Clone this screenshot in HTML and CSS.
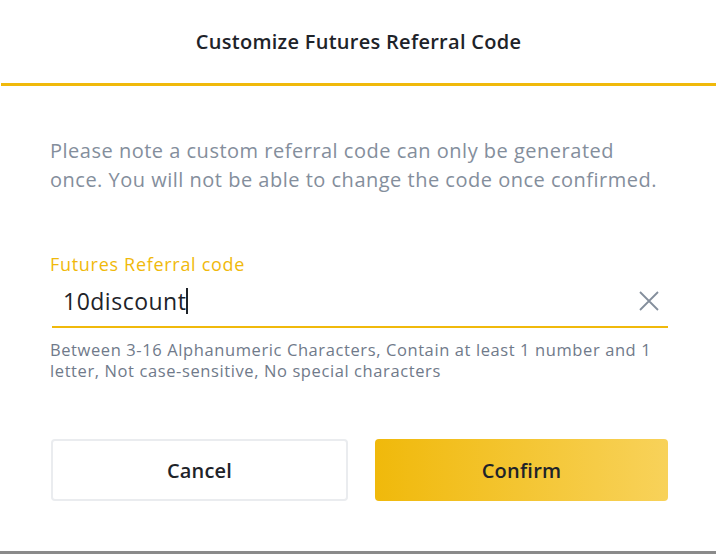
FILE: index.html
```html
<!DOCTYPE html>
<html>
<head>
<meta charset="utf-8">
<link rel="stylesheet" href="styles.css">
</head>
<body>
<div class="modal">
  <div class="header"><h1 class="title">Customize Futures Referral Code</h1></div>
  <div class="content">
    <p class="note">Please note a custom referral code can only be generated once. You will not be able to change the code once confirmed.</p>
    <div class="field">
      <div class="label">Futures Referral code</div>
      <div class="input-row">
        <span class="value">10discount</span><span class="caret"></span>
        <svg class="clear" width="22" height="22" viewBox="0 0 22 22"><path d="M2 2 L20 20 M20 2 L2 20" stroke="#848e9c" stroke-width="1.8" fill="none"/></svg>
      </div>
      <div class="hint">Between 3-16 Alphanumeric Characters, Contain at least 1 number and 1 letter, Not case-sensitive, No special characters</div>
    </div>
    <div class="actions">
      <button class="btn btn-cancel">Cancel</button>
      <button class="btn btn-confirm">Confirm</button>
    </div>
  </div>
</div>
</body>
</html>
```
FILE: styles.css
```css
html, body { margin: 0; padding: 0; background: #fff; }
body { font-family: "Open Sans", "Noto Sans", sans-serif; }
.modal {
  width: 716px;
  height: 554px;
  box-sizing: border-box;
  border-bottom: 3px solid #8a8a8a;
  display: flex;
  flex-direction: column;
}
.header {
  height: 83px;
  border-bottom: 3px solid #f0b90b;
  display: flex;
  align-items: center;
  justify-content: center;
  margin-left: 1px;
}
.title {
  margin: 0;
  font-size: 20px;
  font-weight: 600;
  letter-spacing: 0.28px;
  color: #1e2329;
}
.content { padding: 0 48px 0 50px; }
.note {
  margin: 50px 0 0;
  font-size: 20px;
  line-height: 29px;
  letter-spacing: 0.5px;
  color: #848e9c;
}
.field { margin-top: 59px; }
.label {
  font-size: 18px;
  line-height: 22px;
  letter-spacing: 0.7px;
  color: #f0b90b;
}
.input-row {
  display: flex;
  align-items: center;
  height: 51px;
  padding: 0 8px 0 11px;
  margin-left: 2px;
  border-bottom: 2px solid #f0b90b;
}
.value { font-size: 23px; letter-spacing: 0.5px; color: #1e2329; }
.caret { width: 2px; height: 26px; background: #1e2329; margin-left: 0; }
.clear { margin-left: auto; }
.hint {
  margin: 11px -22px 0 0;
  font-size: 16.5px;
  line-height: 21px;
  letter-spacing: 0.6px;
  color: #707a8a;
}
.actions {
  display: flex;
  gap: 27px;
  margin-top: 58px;
  padding-left: 1px;
}
.btn {
  flex: 1;
  height: 62px;
  border-radius: 4px;
  font-family: inherit;
  font-size: 20px;
  font-weight: 600;
  letter-spacing: 0.2px;
  color: #1e2329;
}
.btn-cancel { background: #fff; border: 2px solid #eaecef; }
.btn-confirm { border: none; background: linear-gradient(90deg, #f0b90b 0%, #f8d25a 100%); }
```
